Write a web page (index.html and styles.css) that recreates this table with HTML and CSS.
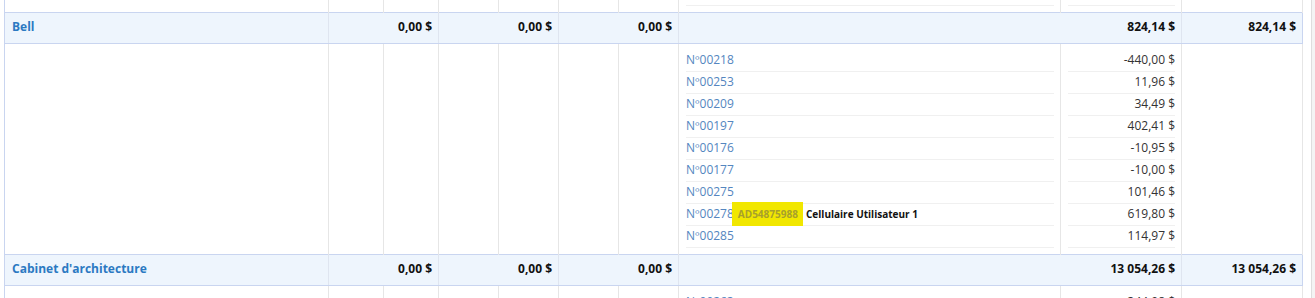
FILE: index.html
```html
<!DOCTYPE html>
<html lang="fr">
<head>
<meta charset="utf-8">
<title>Rapport</title>
<link rel="stylesheet" href="styles.css">
</head>
<body>
<div class="viewport">
  <div class="scroller">
    <table class="report">
      <colgroup>
        <col class="c-name"><col class="c-s"><col class="c-s"><col class="c-m"><col class="c-m"><col class="c-m"><col class="c-m"><col class="c-ref"><col class="c-amt"><col class="c-amt">
      </colgroup>
      <tbody>
        <tr class="detail">
          <td class="first"></td><td></td><td></td><td></td><td></td><td></td><td></td>
          <td class="list-cell"><ul class="items"><li>&nbsp;</li></ul></td>
          <td class="list-cell"><ul class="items amounts"><li>&nbsp;</li></ul></td>
          <td></td>
        </tr>
        <tr class="group">
          <td class="first name">Bell</td>
          <td colspan="2" class="num">0,00 $</td>
          <td colspan="2" class="num">0,00 $</td>
          <td colspan="2" class="num">0,00 $</td>
          <td colspan="2" class="num">824,14 $</td>
          <td class="num">824,14 $</td>
        </tr>
        <tr class="detail">
          <td class="first"></td><td></td><td></td><td></td><td></td><td></td><td></td>
          <td class="list-cell">
            <ul class="items">
              <li><a class="ref">Nº00218</a></li>
              <li><a class="ref">Nº00253</a></li>
              <li><a class="ref">Nº00209</a></li>
              <li><a class="ref">Nº00197</a></li>
              <li><a class="ref">Nº00176</a></li>
              <li><a class="ref">Nº00177</a></li>
              <li><a class="ref">Nº00275</a></li>
              <li><a class="ref">Nº00278</a><span class="tag">AD54875988</span> <span class="note">Cellulaire Utilisateur 1</span></li>
              <li><a class="ref">Nº00285</a></li>
            </ul>
          </td>
          <td class="list-cell">
            <ul class="items amounts">
              <li>-440,00 $</li>
              <li>11,96 $</li>
              <li>34,49 $</li>
              <li>402,41 $</li>
              <li>-10,95 $</li>
              <li>-10,00 $</li>
              <li>101,46 $</li>
              <li>619,80 $</li>
              <li>114,97 $</li>
            </ul>
          </td>
          <td></td>
        </tr>
        <tr class="group">
          <td class="first name">Cabinet d'architecture</td>
          <td colspan="2" class="num">0,00 $</td>
          <td colspan="2" class="num">0,00 $</td>
          <td colspan="2" class="num">0,00 $</td>
          <td colspan="2" class="num">13 054,26 $</td>
          <td class="num">13 054,26 $</td>
        </tr>
        <tr class="detail">
          <td class="first"></td><td></td><td></td><td></td><td></td><td></td><td></td>
          <td class="list-cell"><ul class="items"><li><a class="ref">Nº00263</a></li><li><a class="ref">Nº00264</a></li></ul></td>
          <td class="list-cell"><ul class="items amounts"><li>344,08 $</li><li>120,00 $</li></ul></td>
          <td></td>
        </tr>
      </tbody>
    </table>
  </div>
  <div class="scrollbar"></div>
</div>
</body>
</html>
```
FILE: styles.css
```css
html, body {
  margin: 0;
  padding: 0;
  background: #ffffff;
}

body {
  font-family: "Open Sans", "Liberation Sans", sans-serif;
  font-size: 12px;
  color: #222;
}

.viewport {
  display: flex;
  height: 298px;
  overflow: hidden;
}

.scroller {
  flex: 0 0 auto;
  padding-left: 4px;
}

.scrollbar {
  margin-left: auto;
  width: 3px;
  border-left: 1px solid #dedede;
  background: #f4f4f4;
}

.report {
  border-collapse: collapse;
  table-layout: fixed;
  width: 1299px;
  margin-top: -22px;
}

.c-name { width: 324px; }
.c-s { width: 55px; }
.c-m { width: 60px; }
.c-ref { width: 382px; }
.c-amt { width: 121px; }

.report td {
  padding: 0;
  border-left: 1px solid #e6e6e6;
  border-right: 1px solid #e6e6e6;
  vertical-align: top;
}

.report td.first {
  border-left: 1px solid #c9d5f0;
}

.group td {
  background: #eef5fd;
  border-top: 1px solid #c9d5f0;
  border-bottom: 1px solid #c9d5f0;
  border-left-color: #dfe5f0;
  border-right-color: #dfe5f0;
  line-height: 28px;
  padding: 0 6px 2px 7px;
  font-weight: 700;
  white-space: nowrap;
  vertical-align: middle;
}

.group td:last-child {
  border-right-color: #c9d5f0;
}

.group .name {
  color: #2b79c2;
}

.group .num {
  text-align: right;
  color: #111;
}

.list-cell {
  padding: 6px 6px 6px 7px !important;
}

.items {
  list-style: none;
  margin: 0;
  padding: 0;
}

.items li {
  height: 20px;
  line-height: 20px;
  padding-bottom: 1px;
  border-bottom: 1px solid #f0f0f0;
  white-space: nowrap;
}

.amounts li {
  text-align: right;
  color: #333;
}

.ref {
  color: #5486c0;
  text-decoration: none;
}

.tag {
  display: inline-block;
  vertical-align: top;
  margin: -2px 0 -2px -2px;
  padding: 0 5px 0 6px;
  height: 24px;
  line-height: 25px;
  background: #f1e700;
  color: #a7a02c;
  font-size: 10px;
  font-weight: 700;
}

.note {
  font-size: 10px;
  font-weight: 700;
  color: #111;
}
```
